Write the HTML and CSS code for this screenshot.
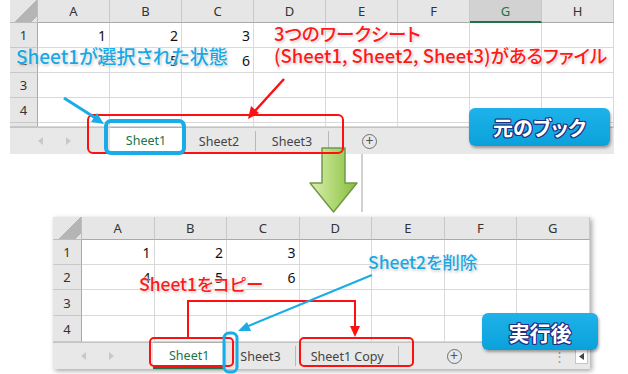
FILE: index.html
```html
<!DOCTYPE html>
<html>
<head>
	<meta charset="utf-8">
	<title>シートのコピー</title>
	<link rel="stylesheet" href="styles.css">
</head>
<body>
	<div class="stage">
		<!-- 元のブック -->
		<div class="book book-top">
			<div class="grid grid-top">
				<div class="corner"></div>
				<div class="ch">A</div><div class="ch">B</div><div class="ch">C</div><div class="ch">D</div>
				<div class="ch">E</div><div class="ch">F</div><div class="ch sel">G</div><div class="ch">H</div>
				<div class="rh">1</div><div class="c">1</div><div class="c">2</div><div class="c">3</div><div class="c"></div>
				<div class="c"></div><div class="c"></div><div class="c"></div><div class="c"></div>
				<div class="rh">2</div><div class="c">4</div><div class="c">5</div><div class="c">6</div><div class="c"></div>
				<div class="c"></div><div class="c"></div><div class="c"></div><div class="c"></div>
				<div class="rh">3</div><div class="c"></div><div class="c"></div><div class="c"></div><div class="c"></div>
				<div class="c"></div><div class="c"></div><div class="c"></div><div class="c"></div>
				<div class="rh">4</div><div class="c"></div><div class="c"></div><div class="c"></div><div class="c"></div>
				<div class="c"></div><div class="c"></div><div class="c"></div><div class="c"></div>
				<div class="rh"></div><div class="c"></div><div class="c"></div><div class="c"></div><div class="c"></div>
				<div class="c"></div><div class="c"></div><div class="c"></div><div class="c"></div>
			</div>
			<div class="tabbar">
				<div class="nav">
					<svg width="6" height="8" viewBox="0 0 6 8"><path d="M5 0L0 4L5 8Z" fill="#c8c8c8"/></svg>
					<svg width="6" height="8" viewBox="0 0 6 8"><path d="M1 0L6 4L1 8Z" fill="#c8c8c8"/></svg>
				</div>
				<div class="tabs">
					<div class="tab active">Sheet1</div>
					<div class="tab">Sheet2</div>
					<div class="tab sep">Sheet3</div>
				</div>
				<div class="plus">+</div>
			</div>
		</div>

		<!-- 実行後 -->
		<div class="book book-bottom">
			<div class="grid grid-bottom">
				<div class="corner"></div>
				<div class="ch">A</div><div class="ch">B</div><div class="ch">C</div><div class="ch">D</div>
				<div class="ch">E</div><div class="ch">F</div><div class="ch">G</div>
				<div class="rh">1</div><div class="c">1</div><div class="c">2</div><div class="c">3</div>
				<div class="c"></div><div class="c"></div><div class="c"></div><div class="c"></div>
				<div class="rh">2</div><div class="c">4</div><div class="c">5</div><div class="c">6</div>
				<div class="c"></div><div class="c"></div><div class="c"></div><div class="c"></div>
				<div class="rh">3</div><div class="c"></div><div class="c"></div><div class="c"></div>
				<div class="c"></div><div class="c"></div><div class="c"></div><div class="c"></div>
				<div class="rh">4</div><div class="c"></div><div class="c"></div><div class="c"></div>
				<div class="c"></div><div class="c"></div><div class="c"></div><div class="c"></div>
			</div>
			<div class="tabbar">
				<div class="nav">
					<svg width="6" height="8" viewBox="0 0 6 8"><path d="M5 0L0 4L5 8Z" fill="#c8c8c8"/></svg>
					<svg width="6" height="8" viewBox="0 0 6 8"><path d="M1 0L6 4L1 8Z" fill="#c8c8c8"/></svg>
				</div>
				<div class="tabs">
					<div class="tab active">Sheet1</div>
					<div class="tab">Sheet3</div>
					<div class="tab">Sheet1 Copy</div>
				</div>
				<div class="plus">+</div>
				<div class="dots">⋮</div>
				<div class="scroll">
					<svg width="5" height="7" viewBox="0 0 5 7"><path d="M5 0L0 3.5L5 7Z" fill="#444"/></svg>
				</div>
			</div>
		</div>

		<!-- 下向き矢印 -->
		<div class="shade-line"></div>
		<svg class="down-arrow" width="56" height="70" viewBox="0 0 56 70">
			<defs>
				<linearGradient id="ga" x1="0" y1="0" x2="1" y2="0">
					<stop offset="0" stop-color="#dcefb4"/>
					<stop offset="0.45" stop-color="#b4da78"/>
					<stop offset="1" stop-color="#86bd42"/>
				</linearGradient>
			</defs>
			<path d="M16 1H39V36H51L27.5 65L4 36H16Z" fill="url(#ga)" stroke="#6f9b45" stroke-width="1.5" stroke-linejoin="round"/>
		</svg>

		<!-- 注釈 -->
		<svg class="marks" width="628" height="374" viewBox="0 0 628 374">
			<rect x="88" y="115" width="255" height="38" rx="5" fill="none" stroke="#ff1010" stroke-width="2"/>
			<rect x="106" y="121" width="78" height="32" rx="5" fill="none" stroke="#19ace6" stroke-width="4"/>
			<line x1="64" y1="98" x2="97" y2="119" stroke="#19ace6" stroke-width="3"/>
			<path d="M104 124L91 122L97 113Z" fill="#19ace6"/>
			<line x1="284" y1="79" x2="254" y2="112" stroke="#ff1010" stroke-width="2.5"/>
			<path d="M248 119L251 106L259 113Z" fill="#ff1010"/>

			<rect x="150" y="338" width="83" height="28" rx="4" fill="none" stroke="#ff1010" stroke-width="2"/>
			<rect x="300" y="338" width="113" height="28" rx="4" fill="none" stroke="#ff1010" stroke-width="2"/>
			<rect x="224" y="333" width="13" height="39" rx="5" fill="none" stroke="#19ace6" stroke-width="3"/>
			<polyline points="188,338 188,301 355,301 355,328" fill="none" stroke="#ff1010" stroke-width="2"/>
			<path d="M355 337L350 326L360 326Z" fill="#ff1010"/>
			<line x1="372" y1="275" x2="246" y2="327" stroke="#19ace6" stroke-width="2"/>
			<path d="M238 331L247 322L251 331Z" fill="#19ace6"/>
		</svg>

		<div class="note blue note-selected">Sheet1が選択された状態</div>
		<div class="note red note-files">3つのワークシート<br>(Sheet1, Sheet2, Sheet3)があるファイル</div>
		<div class="note red note-copy">Sheet1をコピー</div>
		<div class="note blue note-delete">Sheet2を削除</div>

		<div class="badge badge-before">元のブック</div>
		<div class="badge badge-after">実行後</div>
	</div>
</body>
</html>
```

FILE: styles.css
```css
*{
	margin: 0;
	padding: 0;
	box-sizing: border-box;
}
body{
	background: #fff;
	font-family: "Noto Sans", "Noto Sans CJK JP", sans-serif;
}
.stage{
	position: relative;
	width: 628px;
	height: 374px;
	overflow: hidden;
}

/* シート */
.book{
	background: #fff;
}
.book-top{
	margin-left: 10px;
	width: 604px;
}
.book-bottom{
	margin-left: 53px;
	margin-top: 63px;
	width: 537px;
	box-shadow: 2px 2px 5px rgba(0,0,0,0.35);
}
.grid{
	display: grid;
}
.grid-top{
	grid-template-columns: 28px repeat(8, 72px);
	grid-template-rows: 23px repeat(4, 25px) 4px;
}
.grid-bottom{
	grid-template-columns: 29px repeat(7, 72.5px);
	grid-template-rows: 23px 25px 25px 26px 26px;
}
.corner{
	background: #e6e6e6 linear-gradient(135deg, transparent 55%, #b5b5b5 55%, #b5b5b5 88%, transparent 88%);
	border-right: 1px solid #bdbdbd;
	border-bottom: 1px solid #bdbdbd;
}
.ch{
	background: #e6e6e6;
	border-right: 1px solid #c8c8c8;
	border-bottom: 1px solid #a9a9a9;
	display: flex;
	align-items: center;
	justify-content: center;
	font-size: 13px;
	color: #333;
}
.ch.sel{
	background: #d2d2d2;
	color: #217346;
	border-bottom: 2px solid #217346;
}
.rh{
	background: #e6e6e6;
	border-right: 1px solid #a9a9a9;
	border-bottom: 1px solid #c8c8c8;
	display: flex;
	align-items: center;
	justify-content: center;
	font-size: 13px;
	color: #333;
}
.c{
	border-right: 1px solid #d9d9d9;
	border-bottom: 1px solid #d9d9d9;
	display: flex;
	align-items: center;
	justify-content: flex-end;
	padding-right: 3px;
	font-size: 14px;
	color: #111;
}

/* シート見出し */
.tabbar{
	height: 27px;
	background: #e8e8e8;
	border-top: 1px solid #c4c4c4;
	display: flex;
	align-items: stretch;
	font-size: 12.5px;
	color: #444;
}
.nav{
	width: 100px;
	display: flex;
	align-items: center;
	gap: 21px;
	padding-left: 28px;
}
.tabs{
	display: flex;
}
.tab{
	padding: 0 14px 0 15px;
	display: flex;
	align-items: center;
	position: relative;
	border-right: 1px solid #b8b8b8;
	margin: 3px 0 3px;
}
.tab.active{
	background: #fff;
	color: #217346;
	margin: 0 1px 0 0;
	border-right: none;
	border-bottom: 2px solid #217346;
	box-shadow: 1px 0 2px rgba(0,0,0,0.35);
	padding: 0 15px 0 16px;
}
.book-top .tab{
	width: 73px;
	justify-content: center;
	padding: 0;
}
.book-top .tab.active{
	width: 72px;
}
.plus{
	margin-left: 33px;
	align-self: center;
	width: 15px;
	height: 15px;
	border: 1px solid #6e6e6e;
	border-radius: 50%;
	display: flex;
	align-items: center;
	justify-content: center;
	font-size: 14px;
	line-height: 1;
	color: #555;
}
.book-bottom .plus{
	margin-left: 48px;
}
.dots{
	margin-left: auto;
	align-self: center;
	color: #999;
	font-size: 13px;
	margin-right: 9px;
}
.scroll{
	align-self: center;
	width: 13px;
	height: 15px;
	background: #fff;
	border: 1px solid #c6c6c6;
	display: flex;
	align-items: center;
	justify-content: center;
	margin-right: 2px;
}

/* 矢印 */
.down-arrow{
	position: absolute;
	left: 306px;
	top: 147px;
}
.shade-line{
	position: absolute;
	left: 361px;
	top: 154px;
	width: 2px;
	height: 58px;
	background: rgba(120,120,120,0.35);
}
.marks{
	position: absolute;
	left: 0;
	top: 0;
}

/* 注釈 */
.note{
	position: absolute;
	font-family: "Noto Sans CJK JP", sans-serif;
	font-feature-settings: "palt";
	font-weight: 500;
	white-space: nowrap;
	line-height: 22px;
	text-shadow: 0 0 2px #fff, 0 0 3px #fff, 1px 1px 3px rgba(0,0,0,0.35);
}
.blue{
	color: #1aa8e4;
}
.red{
	color: #ff1a1a;
}
.note-selected{
	left: 16px;
	top: 45px;
	font-size: 19px;
}
.note-files{
	left: 274px;
	top: 22px;
	font-size: 18.5px;
}
.note-copy{
	left: 139px;
	top: 273px;
	font-size: 17.5px;
}
.note-delete{
	left: 368px;
	top: 251px;
	font-size: 17.5px;
}
.badge{
	position: absolute;
	background: linear-gradient(#1fb2ea, #0aa1da);
	border-radius: 6px;
	box-shadow: 1px 2px 3px rgba(0,0,0,0.35);
	display: flex;
	align-items: center;
	justify-content: center;
	font-family: "Noto Sans CJK JP", sans-serif;
	font-feature-settings: "palt";
	font-weight: bold;
	font-size: 20px;
	color: #fff;
	text-shadow: 1px 0 0 #1f2f86, -1px 0 0 #1f2f86, 0 1px 0 #1f2f86, 0 -1px 0 #1f2f86,
		1px 1px 0 #1f2f86, -1px -1px 0 #1f2f86, 1px -1px 0 #1f2f86, -1px 1px 0 #1f2f86;
}
.badge-before{
	left: 469px;
	top: 108px;
	width: 141px;
	height: 38px;
}
.badge-after{
	left: 482px;
	top: 313px;
	width: 116px;
	height: 37px;
	font-size: 21px;
}
```
